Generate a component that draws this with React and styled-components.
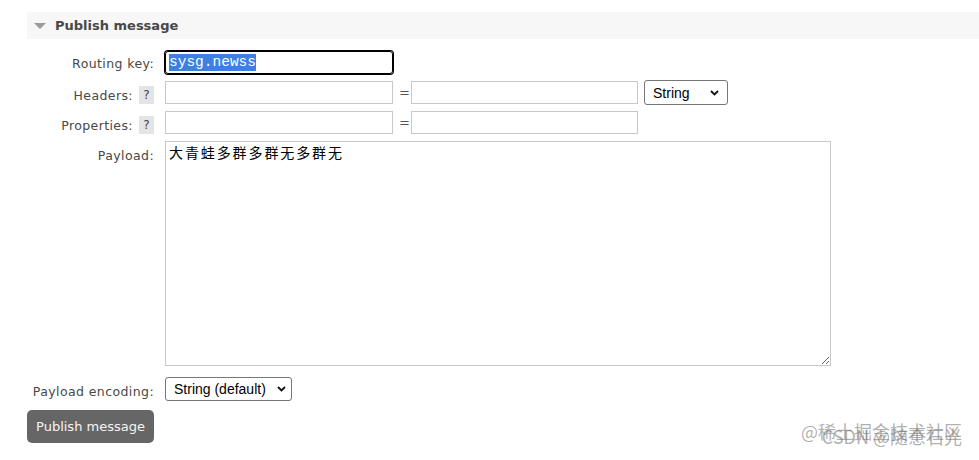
import React from 'react';
import styled, { createGlobalStyle } from 'styled-components';

const GlobalStyle = createGlobalStyle`
  body {
    margin: 0;
    background: #fff;
    font-family: "DejaVu Sans", Verdana, sans-serif;
    color: #484848;
  }
`;

const Page = styled.div`
  position: relative;
  width: 979px;
  height: 460px;
  padding: 12px 0 0 27px;
  box-sizing: border-box;
  overflow: hidden;
`;

const SectionHeader = styled.div`
  display: flex;
  align-items: center;
  gap: 9px;
  height: 27px;
  padding-left: 7px;
  background: #f7f7f7;
  font-size: 13px;
  font-weight: bold;
  color: #484848;
`;

const Triangle = styled.span`
  width: 0;
  height: 0;
  border-left: 6px solid transparent;
  border-right: 6px solid transparent;
  border-top: 6px solid #9a9a9a;
  margin-top: 1px;
`;

const Form = styled.div`
  display: grid;
  grid-template-columns: 127px 1fr;
  column-gap: 11px;
  row-gap: 7px;
  margin-top: 12px;
`;

const Label = styled.div`
  display: flex;
  justify-content: flex-end;
  align-items: flex-start;
  gap: 6px;
  height: 23px;
  box-sizing: border-box;
  padding-top: ${p => p.$top || 6}px;
  font-size: 12.5px;
  letter-spacing: 0.4px;
  line-height: 18px;
  color: #484848;
  white-space: nowrap;
`;

const Help = styled.span`
  display: inline-flex;
  align-items: center;
  justify-content: center;
  width: 15px;
  height: 18px;
  margin-top: -1px;
  background: #e4e4e4;
  color: #444;
  font-size: 12px;
  letter-spacing: 0;
`;

const Field = styled.div`
  display: flex;
  align-items: center;
  gap: 6px;
  height: ${p => (p.$h ? `${p.$h}px` : 'auto')};
  margin-top: ${p => p.$offset || 0}px;
`;

const TextInput = styled.input`
  width: ${p => p.$w || 228}px;
  height: 23px;
  box-sizing: border-box;
  border: 1px solid #c8c8c8;
  border-radius: 0;
  padding: 0 3px;
  font: 14px "Liberation Mono", monospace;
  outline: none;
`;

const FocusedInput = styled.div`
  display: flex;
  align-items: center;
  width: 228px;
  height: 23px;
  box-sizing: border-box;
  border: 1px solid #000;
  box-shadow: 0 0 0 1px #000;
  border-radius: 3px;
  padding-left: 3px;
  font: 14.5px "Liberation Mono", monospace;
`;

const Selected = styled.span`
  background: #3d80e0;
  color: #fff;
  line-height: 17px;
`;

const Equals = styled.span`
  font-size: 13px;
  color: #555;
  width: 6px;
`;

const SelectWrap = styled.div`
  position: relative;
  display: inline-flex;
`;

const Select = styled.select`
  appearance: none;
  width: ${p => p.$w}px;
  height: ${p => p.$h}px;
  box-sizing: border-box;
  border: 1px solid #767676;
  border-radius: 3px;
  background: #fff;
  padding: 0 0 0 8px;
  font: 14px "Liberation Sans", Arial, sans-serif;
  color: #000;
`;

const Chevron = styled.svg`
  position: absolute;
  right: ${p => p.$r}px;
  top: 50%;
  transform: translateY(-50%);
  pointer-events: none;
`;

const Payload = styled.textarea`
  width: 666px;
  height: 225px;
  box-sizing: border-box;
  border: 1px solid #c8c8c8;
  padding: 1px 3px;
  font: 14px "Noto Sans CJK SC", sans-serif;
  letter-spacing: 1.9px;
  line-height: 18px;
  color: #000;
  resize: both;
  outline: none;
`;

const Button = styled.button`
  margin-top: 9px;
  width: 127px;
  height: 33px;
  border: none;
  border-radius: 5px;
  background: #666;
  color: #f4f4f4;
  font: 13px "DejaVu Sans", Verdana, sans-serif;
  padding: 0;
  cursor: pointer;
`;

const Watermark = styled.div`
  position: absolute;
  right: ${p => p.$r}px;
  top: ${p => p.$t}px;
  font: 18px "Noto Sans CJK SC", sans-serif;
  line-height: 20px;
  color: rgba(110, 110, 110, 0.55);
  white-space: nowrap;
  pointer-events: none;
`;

const ChevronIcon = ({ r }) => (
  <Chevron $r={r} width="9" height="6" viewBox="0 0 9 6">
    <path d="M1 1 L4.5 4.5 L8 1" fill="none" stroke="#111" strokeWidth="1.8" />
  </Chevron>
);

export default function App() {
  return (
    <Page>
      <GlobalStyle />
      <SectionHeader>
        <Triangle />
        Publish message
      </SectionHeader>
      <Form>
        <Label $top={4}>Routing key:</Label>
        <Field>
          <FocusedInput>
            <Selected>sysg.newss</Selected>
          </FocusedInput>
        </Field>

        <Label>Headers: <Help>?</Help></Label>
        <Field $h={23}>
          <TextInput />
          <Equals>=</Equals>
          <TextInput $w={227} />
          <SelectWrap>
            <Select $w={84} $h={25} defaultValue="String">
              <option>String</option>
              <option>Number</option>
              <option>Boolean</option>
            </Select>
            <ChevronIcon r={9} />
          </SelectWrap>
        </Field>

        <Label>Properties: <Help>?</Help></Label>
        <Field>
          <TextInput />
          <Equals>=</Equals>
          <TextInput $w={227} />
        </Field>

        <Label $top={6}>Payload:</Label>
        <Field>
          <Payload defaultValue="大青蛙多群多群无多群无" />
        </Field>

        <Label $top={10}>Payload encoding:</Label>
        <Field $offset={4}>
          <SelectWrap>
            <Select $w={127} $h={24} defaultValue="String (default)">
              <option>String (default)</option>
              <option>Base64</option>
            </Select>
            <ChevronIcon r={6} />
          </SelectWrap>
        </Field>
      </Form>
      <Button>Publish message</Button>
      <Watermark $r={17} $t={421}>@稀土掘金技术社区</Watermark>
      <Watermark $r={17} $t={426}>CSDN @随意石光</Watermark>
    </Page>
  );
}
